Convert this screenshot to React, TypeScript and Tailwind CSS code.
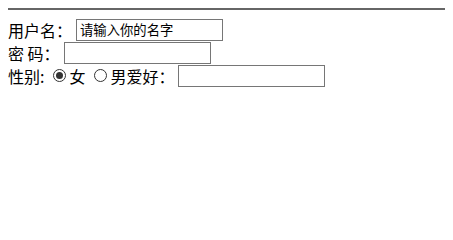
import React from 'react';

function Radio({ checked = false }: { checked?: boolean }) {
  return (
    <span className="mr-[3px] ml-[5px] flex h-[13px] w-[13px] items-center justify-center rounded-full border border-[#333] bg-white">
      {checked && <span className="h-[7px] w-[7px] rounded-full bg-[#333]" />}
    </span>
  );
}

function TextBox({ value = '' }: { value?: string }) {
  return (
    <div className="flex h-[22px] w-[147px] items-center border border-[#767676] bg-white px-[3px] text-[13.33px] text-black">
      {value}
    </div>
  );
}

export default function App() {
  return (
    <div className="min-h-[201px] bg-white px-2 pt-2 text-[16px] text-black [font-family:'Noto_Sans_CJK_SC',sans-serif]">
      <hr className="border-0 border-t-2 border-[#666]" />
      <div className="mt-2 flex flex-col">
        <div className="flex h-[23px] items-center">
          <span>用户名：</span>
          <span className="ml-[4px]" />
          <TextBox value="请输入你的名字" />
        </div>
        <div className="flex h-[23px] items-center">
          <span>密&nbsp;码：</span>
          <span className="ml-[4px]" />
          <TextBox />
        </div>
        <div className="flex h-[23px] items-center">
          <span>性别:</span>
          <span className="ml-[4px]" />
          <Radio checked />
          <span>女</span>
          <span className="ml-[4px]" />
          <Radio />
          <span>男爱好：</span>
          <span className="ml-[4px]" />
          <TextBox />
        </div>
      </div>
    </div>
  );
}
